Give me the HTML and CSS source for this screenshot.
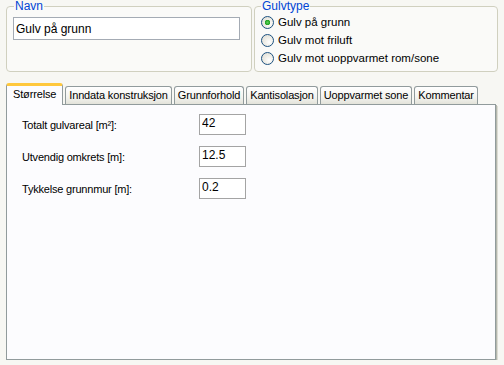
FILE: index.html
```html
<!DOCTYPE html>
<html lang="no">
<head>
    <meta charset="UTF-8">
    <meta name="viewport" content="width=device-width, initial-scale=1.0">
    <title>Gulv</title>
    <link rel="stylesheet" href="styles.css">
</head>
<body>
    <div class="window">
        <div class="groups">
            <fieldset class="group group-name">
                <legend>Navn</legend>
                <input type="text" class="name-input" value="Gulv på grunn">
            </fieldset>
            <fieldset class="group group-type">
                <legend>Gulvtype</legend>
                <label class="radio"><input type="radio" name="gulvtype" checked> Gulv på grunn</label>
                <label class="radio"><input type="radio" name="gulvtype"> Gulv mot friluft</label>
                <label class="radio"><input type="radio" name="gulvtype"> Gulv mot uoppvarmet rom/sone</label>
            </fieldset>
        </div>

        <div class="tab-strip">
            <button class="tab active">Størrelse</button>
            <button class="tab">Inndata konstruksjon</button>
            <button class="tab">Grunnforhold</button>
            <button class="tab">Kantisolasjon</button>
            <button class="tab">Uoppvarmet sone</button>
            <button class="tab">Kommentar</button>
        </div>
        <div class="tab-panel">
            <div class="field">
                <label for="areal">Totalt gulvareal [m²]:</label>
                <input type="text" id="areal" value="42">
            </div>
            <div class="field">
                <label for="omkrets">Utvendig omkrets [m]:</label>
                <input type="text" id="omkrets" value="12.5">
            </div>
            <div class="field">
                <label for="grunnmur">Tykkelse grunnmur [m]:</label>
                <input type="text" id="grunnmur" value="0.2">
            </div>
        </div>
    </div>
</body>
</html>
```

FILE: styles.css
```css
/* Page */
body {
    margin: 0;
    background: #f7f7f3;
    font-family: "Liberation Sans", Arial, sans-serif;
    font-size: 11px;
    color: #000;
}
.window {
    padding: 0 6px;
}

/* Group boxes */
.groups {
    display: flex;
    gap: 2px;
}
.group {
    box-sizing: border-box;
    height: 72px;
    margin: 0;
    padding: 5px 6px 0 6px;
    border: 1px solid #d0d0bf;
    border-radius: 4px;
    background: #fafaf8;
}
.group legend {
    margin-left: 1px;
    padding: 0 1px;
    line-height: 12px;
    font-size: 12px;
    color: #0046d5;
}
.group-name {
    width: 246px;
}
.group-type {
    flex: 1;
    padding: 1px 6px 0 5px;
}
.name-input {
    box-sizing: border-box;
    display: block;
    width: 227px;
    height: 23px;
    margin: 0;
    padding: 0 2px;
    border: 1px solid #a4abb4;
    background: #fff;
    font: inherit;
    font-size: 12px;
}

/* Radios */
.radio {
    display: flex;
    align-items: center;
    gap: 4px;
    height: 18px;
    margin-left: 1px;
    font-size: 11.5px;
}
.radio input {
    appearance: none;
    width: 13px;
    height: 13px;
    margin: 0;
    border: 1px solid #1c5180;
    border-radius: 50%;
    background: radial-gradient(circle at 65% 65%, #fff 0, #f0efe9 40%, #dcdad0 100%);
}
.radio input:checked {
    background: radial-gradient(circle, #5cd25c 0, #21a121 2.5px, transparent 3px),
                radial-gradient(circle at 65% 65%, #fff 0, #f0efe9 40%, #dcdad0 100%);
}

/* Tabs */
.tab-strip {
    display: flex;
    align-items: flex-end;
    gap: 1px;
    height: 21px;
    margin-top: 11px;
    position: relative;
    z-index: 1;
}
.tab {
    box-sizing: border-box;
    height: 18px;
    margin: 0 0 0 1px;
    padding: 0 3px 1px;
    border: 1px solid #919b9c;
    border-bottom: none;
    border-radius: 3px 3px 0 0;
    background: linear-gradient(#fff, #f3f3ef 60%, #e3e3da);
    font: inherit;
    letter-spacing: -0.15px;
    white-space: nowrap;
    color: #000;
    cursor: pointer;
}
.tab.active {
    height: 22px;
    margin: 0 0 -1px 0;
    padding: 0 6px 3px;
    border-top: 3px solid #ffc83c;
    background: #fcfcfe;
}

.tab-panel {
    box-sizing: border-box;
    width: 490px;
    height: 256px;
    padding: 9px 0 0 15px;
    border: 1px solid #919b9c;
    background: #fcfcfe;
    box-shadow: 1px 1px 0 #b5b8ad, 2px 2px 0 #dcdcd4;
}

/* Fields */
.field {
    display: flex;
    align-items: center;
    height: 21px;
    margin-bottom: 11px;
}
.field label {
    width: 177px;
    letter-spacing: -0.2px;
}
.field input {
    box-sizing: border-box;
    width: 47px;
    height: 21px;
    margin: 0;
    padding: 0 2px 3px;
    border: 1px solid #a4a4a4;
    background: #fff;
    font: inherit;
    font-size: 12px;
}
```
